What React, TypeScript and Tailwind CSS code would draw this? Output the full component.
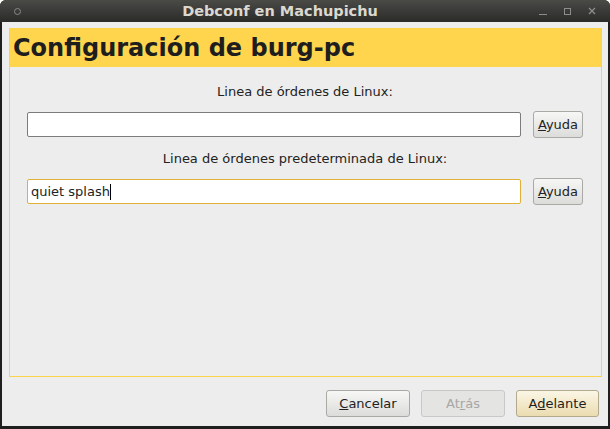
import React from "react";

const font = { fontFamily: '"DejaVu Sans", "Liberation Sans", sans-serif' };

const Btn = ({
  children,
  className = "",
}: {
  children: React.ReactNode;
  className?: string;
}) => (
  <div
    className={
      "h-[27px] flex items-center justify-center rounded-[3px] border text-[13px] " +
      className
    }
  >
    {children}
  </div>
);

export default function App() {
  return (
    <div className="w-[610px] h-[429px] bg-white" style={font}>
      <div className="w-full h-full flex flex-col rounded-t-[6px] bg-[#1f1f1f] overflow-hidden">
        {/* title bar */}
        <div className="h-[22px] flex items-center px-[14px] bg-gradient-to-b from-[#4a4a47] to-[#2b2b2a] text-[#dcd8cf]">
          <div className="w-[7px] h-[7px] rounded-full border border-[#8a8a86]" />
          <div className="flex-1 text-center font-bold text-[14.5px] leading-none">
            Debconf en Machupichu
          </div>
          <div className="flex items-center gap-[17px] text-[#8d8d89]">
            <div className="w-[8px] h-[1px] bg-[#8d8d89] mt-[6px]" />
            <div className="w-[7px] h-[7px] border border-[#8d8d89]" />
            <svg width="8" height="8" viewBox="0 0 8 8">
              <path d="M1 1 L7 7 M7 1 L1 7" stroke="#8d8d89" strokeWidth="1.3" />
            </svg>
          </div>
        </div>

        {/* body */}
        <div className="flex-1 mx-[2px] mb-[3px] bg-[#ededed] flex flex-col">
          <div className="mt-[6px] ml-[7px] mr-[6px] h-[349px] border border-[#fdd34c] flex flex-col">
            <div className="h-[38px] bg-[#ffd54e] flex items-center pl-[3px]">
              <span className="font-bold text-[24px] text-[#1e1e1e] leading-none">
                Configuración de burg-pc
              </span>
            </div>
            <div className="flex flex-col pl-[17px] pr-[18px] text-[#222]">
              <div className="h-[44px] pt-[5px] flex items-center justify-center text-[13px]">
                Linea de órdenes de Linux:
              </div>
              <div className="flex items-center gap-[12px]">
                <div className="flex-1 h-[25px] bg-white border border-[#7c7c7c] rounded-[2px]" />
                <Btn className="w-[50px] border-[#a9a9a6] bg-gradient-to-b from-[#f7f7f6] to-[#dcdcda]">
                  <span>
                    <u>A</u>yuda
                  </span>
                </Btn>
              </div>
              <div className="h-[40px] pt-[2px] flex items-center justify-center text-[13px]">
                Linea de órdenes predeterminada de Linux:
              </div>
              <div className="flex items-center gap-[12px]">
                <div className="flex-1 h-[25px] bg-white border border-[#e0b13a] rounded-[2px] flex items-center px-[3px] text-[13px]">
                  quiet splash
                  <span className="w-[1px] h-[16px] bg-black" />
                </div>
                <Btn className="w-[50px] border-[#a9a9a6] bg-gradient-to-b from-[#f7f7f6] to-[#dcdcda]">
                  <span>
                    <u>A</u>yuda
                  </span>
                </Btn>
              </div>
            </div>
          </div>

          {/* bottom buttons */}
          <div className="flex justify-end gap-[11px] mt-[13px] pr-[9px]">
            <Btn className="w-[84px] border-[#a9a9a6] bg-gradient-to-b from-[#f7f7f6] to-[#dcdcda] text-[#222]">
              <span>
                <u>C</u>ancelar
              </span>
            </Btn>
            <Btn className="w-[84px] border-[#c8c8c6] bg-[#e4e4e3] text-[#a7a7a5]">
              <span>
                At<u>r</u>ás
              </span>
            </Btn>
            <Btn className="w-[83px] border-[#b3a98e] bg-gradient-to-b from-[#fbf6e6] to-[#ebdcb0] text-[#1e1e1e]">
              <span>
                A<u>d</u>elante
              </span>
            </Btn>
          </div>
        </div>
      </div>
    </div>
  );
}
